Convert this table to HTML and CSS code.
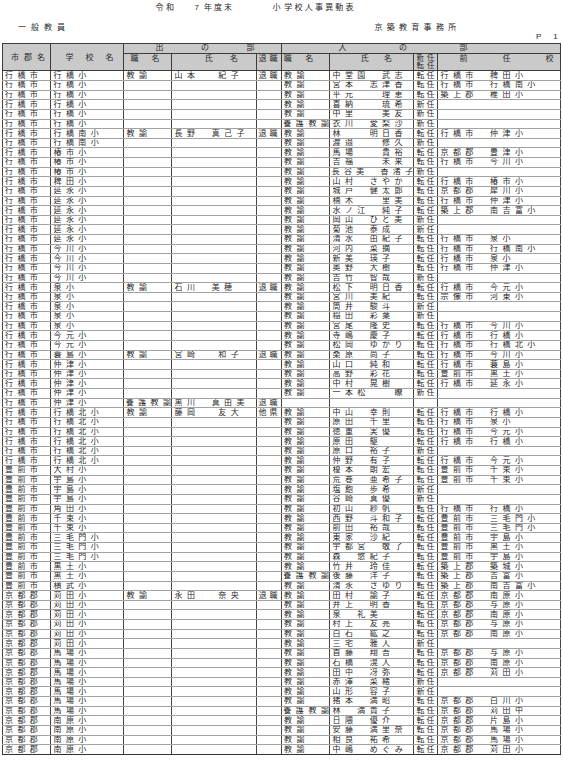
FILE: index.html
```html
<!DOCTYPE html>
<html lang="ja">
<head>
<meta charset="utf-8">
<title>令和7年度末 小学校人事異動表</title>
<link rel="stylesheet" href="styles.css">
</head>
<body>
<div class="sheet">
  <div class="title"><span class="t1">令和</span><span class="t2">7</span><span class="t3">年度末</span><span class="t4">小</span><span class="t5">学校人事異動表</span></div>
  <div class="org"><span class="org-l">一般教員</span><span class="org-r">京築教育事務所</span></div>
  <div class="page-no"><span>P</span><span class="pn-num">1</span></div>
  <table class="list">
    <colgroup>
      <col class="c1"><col class="c2"><col class="c3"><col class="c4"><col class="c5"><col class="c6"><col class="c7"><col class="c8"><col class="c9">
    </colgroup>
    <thead>
      <tr class="hr1">
        <th rowspan="2" class="h-city">市郡名</th>
        <th rowspan="2" class="h-school">学校名</th>
        <th colspan="3" class="h-out">出の部</th>
        <th colspan="4" class="h-in">入の部</th>
      </tr>
      <tr class="hr2">
        <th class="h-job">職名</th>
        <th class="h-name-o">氏名</th>
        <th class="h-ret">退職</th>
        <th class="h-job-i">職名</th>
        <th class="h-name-i">氏名</th>
        <th class="h-kind">新任<br>転任</th>
        <th class="h-prev">前任校</th>
      </tr>
    </thead>
    <tbody>
      <tr><td>行橋市</td><td>行橋小</td><td>教諭</td><td>山本　 紀子</td><td>退職</td><td>教諭</td><td>中堂園　武志</td><td>転任</td><td>行橋市　稗田小</td></tr>
      <tr><td>行橋市</td><td>行橋小</td><td></td><td></td><td></td><td>教諭</td><td>宮本　志津香</td><td>転任</td><td>行橋市　行橋南小</td></tr>
      <tr><td>行橋市</td><td>行橋小</td><td></td><td></td><td></td><td>教諭</td><td>平元　　理恵</td><td>転任</td><td>築上郡　椎田小</td></tr>
      <tr><td>行橋市</td><td>行橋小</td><td></td><td></td><td></td><td>教諭</td><td>喜納　　琉希</td><td>新任</td><td></td></tr>
      <tr><td>行橋市</td><td>行橋小</td><td></td><td></td><td></td><td>教諭</td><td>中里　　美友</td><td>新任</td><td></td></tr>
      <tr><td>行橋市</td><td>行橋小</td><td></td><td></td><td></td><td class="fill">養護教諭</td><td>衣川　愛梨沙</td><td>新任</td><td></td></tr>
      <tr><td>行橋市</td><td>行橋南小</td><td>教諭</td><td>長野　真己子</td><td>退職</td><td>教諭</td><td>林　　明日香</td><td>転任</td><td>行橋市　仲津小</td></tr>
      <tr><td>行橋市</td><td>行橋南小</td><td></td><td></td><td></td><td>教諭</td><td>渡邉　　修久</td><td>新任</td><td></td></tr>
      <tr><td>行橋市</td><td>椿市小</td><td></td><td></td><td></td><td>教諭</td><td>馬場　　貴裕</td><td>転任</td><td>京都郡　豊津小</td></tr>
      <tr><td>行橋市</td><td>椿市小</td><td></td><td></td><td></td><td>教諭</td><td>吉福　　未来</td><td>転任</td><td>行橋市　今川小</td></tr>
      <tr><td>行橋市</td><td>椿市小</td><td></td><td></td><td></td><td>教諭</td><td class="fill">長谷美　香渚子</td><td>新任</td><td></td></tr>
      <tr><td>行橋市</td><td>稗田小</td><td></td><td></td><td></td><td>教諭</td><td>山村　さやか</td><td>転任</td><td>行橋市　椿市小</td></tr>
      <tr><td>行橋市</td><td>延永小</td><td></td><td></td><td></td><td>教諭</td><td>城戸　健太郎</td><td>転任</td><td>京都郡　犀川小</td></tr>
      <tr><td>行橋市</td><td>延永小</td><td></td><td></td><td></td><td>教諭</td><td>楠木　　里美</td><td>転任</td><td>行橋市　仲津小</td></tr>
      <tr><td>行橋市</td><td>延永小</td><td></td><td></td><td></td><td>教諭</td><td>水ノ江　純子</td><td>転任</td><td>築上郡　南吉富小</td></tr>
      <tr><td>行橋市</td><td>延永小</td><td></td><td></td><td></td><td>教諭</td><td>岡山　ひと美</td><td>新任</td><td></td></tr>
      <tr><td>行橋市</td><td>延永小</td><td></td><td></td><td></td><td>教諭</td><td>菊池　泰成</td><td>新任</td><td></td></tr>
      <tr><td>行橋市</td><td>延永小</td><td></td><td></td><td></td><td>教諭</td><td>清水　由紀子</td><td>転任</td><td>行橋市　泉小</td></tr>
      <tr><td>行橋市</td><td>今川小</td><td></td><td></td><td></td><td>教諭</td><td>河内　菜摘</td><td>転任</td><td>行橋市　行橋南小</td></tr>
      <tr><td>行橋市</td><td>今川小</td><td></td><td></td><td></td><td>教諭</td><td>新美　瑛子</td><td>転任</td><td>行橋市　泉小</td></tr>
      <tr><td>行橋市</td><td>今川小</td><td></td><td></td><td></td><td>教諭</td><td>奥野　大樹</td><td>転任</td><td>行橋市　仲津小</td></tr>
      <tr><td>行橋市</td><td>今川小</td><td></td><td></td><td></td><td>教諭</td><td>吉竹　智哉</td><td>新任</td><td></td></tr>
      <tr><td>行橋市</td><td>泉小</td><td>教諭</td><td>石川　美穂</td><td>退職</td><td>教諭</td><td>松下　明日香</td><td>転任</td><td>行橋市　今元小</td></tr>
      <tr><td>行橋市</td><td>泉小</td><td></td><td></td><td></td><td>教諭</td><td>宮川　美紀</td><td>転任</td><td>宗像市　河東小</td></tr>
      <tr><td>行橋市</td><td>泉小</td><td></td><td></td><td></td><td>教諭</td><td>筒井　駿斗</td><td>新任</td><td></td></tr>
      <tr><td>行橋市</td><td>泉小</td><td></td><td></td><td></td><td>教諭</td><td>稲田　彩葉</td><td>新任</td><td></td></tr>
      <tr><td>行橋市</td><td>泉小</td><td></td><td></td><td></td><td>教諭</td><td>宮尾　隆史</td><td>転任</td><td>行橋市　今川小</td></tr>
      <tr><td>行橋市</td><td>今元小</td><td></td><td></td><td></td><td>教諭</td><td>寺嶋　慶子</td><td>転任</td><td>行橋市　行橋小</td></tr>
      <tr><td>行橋市</td><td>今元小</td><td></td><td></td><td></td><td>教諭</td><td>松岡　ゆかり</td><td>転任</td><td>行橋市　行橋北小</td></tr>
      <tr><td>行橋市</td><td>蓑島小</td><td>教諭</td><td>宮崎　 和子</td><td>退職</td><td>教諭</td><td>桑原　尚子</td><td>転任</td><td>行橋市　今川小</td></tr>
      <tr><td>行橋市</td><td>仲津小</td><td></td><td></td><td></td><td>教諭</td><td>山口　純和</td><td>転任</td><td>行橋市　蓑島小</td></tr>
      <tr><td>行橋市</td><td>仲津小</td><td></td><td></td><td></td><td>教諭</td><td>高野　彩花</td><td>転任</td><td>豊前市　黒土小</td></tr>
      <tr><td>行橋市</td><td>仲津小</td><td></td><td></td><td></td><td>教諭</td><td>中村　晃樹</td><td>転任</td><td>行橋市　延永小</td></tr>
      <tr><td>行橋市</td><td>仲津小</td><td></td><td></td><td></td><td>教諭</td><td>一本松　　瞭</td><td>新任</td><td></td></tr>
      <tr><td>行橋市</td><td>仲津小</td><td class="fill">養護教諭</td><td>黒川　真由美</td><td>退職</td><td></td><td></td><td></td><td></td></tr>
      <tr><td>行橋市</td><td>行橋北小</td><td>教諭</td><td>藤岡　 友大</td><td>他県</td><td>教諭</td><td>中山　幸則</td><td>転任</td><td>行橋市　行橋小</td></tr>
      <tr><td>行橋市</td><td>行橋北小</td><td></td><td></td><td></td><td>教諭</td><td>原田　千里</td><td>転任</td><td>行橋市　泉小</td></tr>
      <tr><td>行橋市</td><td>行橋北小</td><td></td><td></td><td></td><td>教諭</td><td>徳重　実優</td><td>転任</td><td>行橋市　今元小</td></tr>
      <tr><td>行橋市</td><td>行橋北小</td><td></td><td></td><td></td><td>教諭</td><td>原田　駆</td><td>転任</td><td>行橋市　行橋小</td></tr>
      <tr><td>行橋市</td><td>行橋北小</td><td></td><td></td><td></td><td>教諭</td><td>原口　裕子</td><td>新任</td><td></td></tr>
      <tr><td>行橋市</td><td>行橋北小</td><td></td><td></td><td></td><td>教諭</td><td>仲野　有子</td><td>転任</td><td>行橋市　今元小</td></tr>
      <tr><td>豊前市</td><td>大村小</td><td></td><td></td><td></td><td>教諭</td><td>榎本　朗宏</td><td>転任</td><td>豊前市　千束小</td></tr>
      <tr><td>豊前市</td><td>宇島小</td><td></td><td></td><td></td><td>教諭</td><td>荒巻　亜希子</td><td>転任</td><td>豊前市　千束小</td></tr>
      <tr><td>豊前市</td><td>宇島小</td><td></td><td></td><td></td><td>教諭</td><td>塩飽　歩希</td><td>新任</td><td></td></tr>
      <tr><td>豊前市</td><td>宇島小</td><td></td><td></td><td></td><td>教諭</td><td>谷崎　真優</td><td>新任</td><td></td></tr>
      <tr><td>豊前市</td><td>角田小</td><td></td><td></td><td></td><td>教諭</td><td>初山　紗帆</td><td>転任</td><td>行橋市　行橋小</td></tr>
      <tr><td>豊前市</td><td>千束小</td><td></td><td></td><td></td><td>教諭</td><td>西野　斗和子</td><td>転任</td><td>豊前市　三毛門小</td></tr>
      <tr><td>豊前市</td><td>千束小</td><td></td><td></td><td></td><td>教諭</td><td>前田　裕哉</td><td>転任</td><td>豊前市　三毛門小</td></tr>
      <tr><td>豊前市</td><td>三毛門小</td><td></td><td></td><td></td><td>教諭</td><td>東家　沙紀</td><td>転任</td><td>豊前市　宇島小</td></tr>
      <tr><td>豊前市</td><td>三毛門小</td><td></td><td></td><td></td><td>教諭</td><td>宇都宮　敬了</td><td>転任</td><td>豊前市　黒土小</td></tr>
      <tr><td>豊前市</td><td>三毛門小</td><td></td><td></td><td></td><td>教諭</td><td>森　悠紀子</td><td>転任</td><td>豊前市　宇島小</td></tr>
      <tr><td>豊前市</td><td>黒土小</td><td></td><td></td><td></td><td>教諭</td><td>竹井　玲佳</td><td>転任</td><td>築上郡　築城小</td></tr>
      <tr><td>豊前市</td><td>黒土小</td><td></td><td></td><td></td><td class="fill">養護教諭</td><td>後藤　洋子</td><td>転任</td><td>築上郡　吉富小</td></tr>
      <tr><td>豊前市</td><td>横武小</td><td></td><td></td><td></td><td>教諭</td><td>清永　さゆり</td><td>転任</td><td>築上郡　南吉富小</td></tr>
      <tr><td>京都郡</td><td>苅田小</td><td>教諭</td><td>永田　 奈央</td><td>退職</td><td>教諭</td><td>田村　諭子</td><td>転任</td><td>京都郡　南原小</td></tr>
      <tr><td>京都郡</td><td>苅田小</td><td></td><td></td><td></td><td>教諭</td><td>井上　明香</td><td>転任</td><td>京都郡　与原小</td></tr>
      <tr><td>京都郡</td><td>苅田小</td><td></td><td></td><td></td><td>教諭</td><td>泉　礼美</td><td>転任</td><td>京都郡　南原小</td></tr>
      <tr><td>京都郡</td><td>苅田小</td><td></td><td></td><td></td><td>教諭</td><td>村上　友亮</td><td>転任</td><td>京都郡　与原小</td></tr>
      <tr><td>京都郡</td><td>苅田小</td><td></td><td></td><td></td><td>教諭</td><td>白石　紘之</td><td>転任</td><td>京都郡　南原小</td></tr>
      <tr><td>京都郡</td><td>苅田小</td><td></td><td></td><td></td><td>教諭</td><td>三宅　雅人</td><td>新任</td><td></td></tr>
      <tr><td>京都郡</td><td>馬場小</td><td></td><td></td><td></td><td>教諭</td><td>首藤　翔吾</td><td>転任</td><td>京都郡　与原小</td></tr>
      <tr><td>京都郡</td><td>馬場小</td><td></td><td></td><td></td><td>教諭</td><td>石橋　滉人</td><td>転任</td><td>京都郡　南原小</td></tr>
      <tr><td>京都郡</td><td>馬場小</td><td></td><td></td><td></td><td>教諭</td><td>田中　冴弥</td><td>転任</td><td>京都郡　苅田小</td></tr>
      <tr><td>京都郡</td><td>馬場小</td><td></td><td></td><td></td><td>教諭</td><td>赤澤　菜緒</td><td>新任</td><td></td></tr>
      <tr><td>京都郡</td><td>馬場小</td><td></td><td></td><td></td><td>教諭</td><td>山形　容子</td><td>新任</td><td></td></tr>
      <tr><td>京都郡</td><td>馬場小</td><td></td><td></td><td></td><td>教諭</td><td>猪本　満昭</td><td>転任</td><td>京都郡　白川小</td></tr>
      <tr><td>京都郡</td><td>馬場小</td><td></td><td></td><td></td><td class="fill">養護教諭</td><td>林　満貴子</td><td>転任</td><td>京都郡　苅田中</td></tr>
      <tr><td>京都郡</td><td>南原小</td><td></td><td></td><td></td><td>教諭</td><td>日隈　優介</td><td>転任</td><td>京都郡　片島小</td></tr>
      <tr><td>京都郡</td><td>南原小</td><td></td><td></td><td></td><td>教諭</td><td>安藤　満里奈</td><td>転任</td><td>京都郡　馬場小</td></tr>
      <tr><td>京都郡</td><td>南原小</td><td></td><td></td><td></td><td>教諭</td><td>相良　祐希</td><td>転任</td><td>京都郡　馬場小</td></tr>
      <tr><td>京都郡</td><td>南原小</td><td></td><td></td><td></td><td>教諭</td><td>中嶋　めぐみ</td><td>転任</td><td>京都郡　苅田小</td></tr>
    </tbody>
  </table>
</div>
</body>
</html>
```

FILE: styles.css
```css
html, body {
  margin: 0;
  padding: 0;
  background: #ffffff;
}

body {
  color: #2a2a2a;
  font-family: "Liberation Sans", "Noto Sans CJK JP", sans-serif;
  font-size: 8px;
}

.sheet {
  width: 563px;
}

/* ---------- title lines ---------- */
.title {
  display: flex;
  align-items: center;
  height: 14px;
  line-height: 9px;
}
.t1 { margin-left: 155.5px; letter-spacing: 2.5px; }
.t2 { margin-left: 17.9px; }
.t3 { margin-left: 5.1px; letter-spacing: 2px; }
.t4 { margin-left: 38.5px; }
.t5 { margin-left: 3.9px; letter-spacing: 2.2px; }

.org {
  display: flex;
  margin-top: 8px;
  height: 10px;
  line-height: 9px;
  align-items: center;
}
.org-l { margin-left: 18px; width: 356.4px; letter-spacing: 5px; }
.org-r { letter-spacing: 4.3px; }

.page-no {
  display: flex;
  align-items: center;
  height: 9px;
  line-height: 9px;
  padding-left: 536px;
}
.pn-num { margin-left: 12px; }

/* ---------- table ---------- */
.list {
  margin: 1.7px 0 0 1.5px;
  width: 558.5px;
  table-layout: fixed;
  border-collapse: collapse;
  border: 1px solid #333333;
}

.c1 { width: 48.5px; }
.c2 { width: 73px; }
.c3 { width: 48px; }
.c4 { width: 85px; }
.c5 { width: 24.5px; }
.c6 { width: 48.5px; }
.c7 { width: 84px; }
.c8 { width: 24px; }
.c9 { width: 123px; }

.list th {
  font-weight: normal;
  white-space: nowrap;
  overflow: hidden;
  padding: 0;
  border: 1px solid #3c3c3c;
  background-color: #d6d6d6;
  background-image: repeating-conic-gradient(#a2a2a2 0% 25%, #f2f2f2 0% 50%);
  background-size: 2px 2px;
  line-height: 8px;
  text-align: justify;
  text-align-last: justify;
}

.hr1 { height: 10px; }
.hr2 { height: 17.8px; }

.list .h-city {
  padding: 2px 5px 0 8.5px;
  vertical-align: middle;
}
.list .h-school {
  padding: 2px 9.5px 0 14.5px;
  vertical-align: middle;
}
.list .h-out {
  padding: 0 26px 0 31.5px;
  vertical-align: middle;
}
.list .h-in {
  padding: 0 92.5px 0 57px;
  vertical-align: middle;
}

.hr2 th {
  vertical-align: top;
  padding-top: 1.5px;
  line-height: 8px;
}
.hr2 .h-job { padding-left: 6.5px; padding-right: 11.5px; }
.hr2 .h-name-o { padding-left: 32.8px; padding-right: 18px; }
.hr2 .h-ret { padding-left: 1.5px; padding-right: 3px; }
.hr2 .h-job-i { padding-left: 2.2px; padding-right: 15.8px; }
.hr2 .h-name-i { padding-left: 30.8px; padding-right: 20.9px; }
.hr2 .h-kind {
  padding: 0.4px 2.5px 0 2.4px;
  font-size: 7.5px;
  line-height: 8.2px;
}
.hr2 .h-prev { padding-left: 21.5px; padding-right: 6.5px; }

.list tbody tr { height: 9.64px; }

.list td {
  padding: 0 0 0 2.5px;
  white-space: nowrap;
  overflow: hidden;
  letter-spacing: 4.4px;
  line-height: 8px;
  vertical-align: middle;
  border-left: 1px solid #454545;
  border-right: 1px solid #454545;
  border-bottom: 1px solid #a3a3a3;
}

.list td:nth-child(5) {
  letter-spacing: 0;
  text-align: justify;
  text-align-last: justify;
  padding: 0 3px 0 1.5px;
}

.list td:nth-child(8) {
  letter-spacing: 0;
  text-align: justify;
  text-align-last: justify;
  padding: 0 2.5px 0 2.4px;
}

.list td.fill {
  letter-spacing: 0;
  text-align: justify;
  text-align-last: justify;
  padding: 0 0 0 1.8px;
}

.list tbody tr:last-child td {
  border-bottom-color: #333333;
}
```
